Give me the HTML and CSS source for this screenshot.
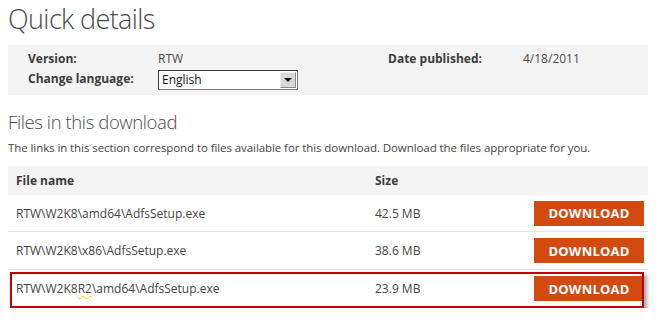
FILE: index.html
```html
<!DOCTYPE html>
<html lang="en">
<head>
  <meta charset="UTF-8">
  <title>Quick details</title>
  <link rel="stylesheet" href="styles.css">
</head>
<body>
<div class="page">
  <h1>Quick details</h1>

  <div class="details">
    <span class="label">Version:</span>
    <span class="value">RTW</span>
    <span class="label">Date published:</span>
    <span class="value">4/18/2011</span>

    <span class="label">Change language:</span>
    <span class="select">
      <span class="select-text">English</span>
      <span class="select-arrow"></span>
    </span>
  </div>

  <h2>Files in this download</h2>
  <p class="intro">The links in this section correspond to files available for this download. Download the files appropriate for you.</p>

  <div class="files">
    <div class="row head">
      <span class="name">File name</span>
      <span class="size">Size</span>
      <span></span>
    </div>
    <div class="row">
      <span class="name">RTW\W2K8\amd64\AdfsSetup.exe</span>
      <span class="size">42.5 MB</span>
      <button class="download">DOWNLOAD</button>
    </div>
    <div class="row">
      <span class="name">RTW\W2K8\x86\AdfsSetup.exe</span>
      <span class="size">38.6 MB</span>
      <button class="download">DOWNLOAD</button>
    </div>
    <div class="row marked">
      <span class="name">RTW\W2K8<span class="spell">R2</span>\amd64\AdfsSetup.exe</span>
      <span class="size">23.9 MB</span>
      <button class="download">DOWNLOAD</button>
      <div class="highlight"></div>
    </div>
  </div>
</div>
</body>
</html>
```

FILE: styles.css
```css
* {
  margin: 0;
  padding: 0;
  box-sizing: border-box;
}

body {
  font-family: 'Open Sans', 'Liberation Sans', sans-serif;
  font-size: 12px;
  color: #454545;
  background: white;
}

.page {
  width: 657px;
  padding: 2px 9px 0 8px;
}

h1 {
  font-weight: 300;
  font-size: 27px;
  line-height: 34px;
  color: #4a4a4a;
  letter-spacing: -0.6px;
  margin-bottom: 9px;
}

.details {
  background: #f4f4f4;
  height: 50px;
  padding: 3px 20px 0 20px;
  display: grid;
  grid-template-columns: 130px 230px 135px auto;
  grid-auto-rows: 20px;
  align-items: center;
}

.label {
  font-weight: 700;
  color: #3b3b3b;
}

.value {
  color: #4a4a4a;
}

.select {
  width: 140px;
  height: 20px;
  margin-top: 3px;
  border: 1px solid #7a7a7a;
  border-top-color: #3c3c3c;
  border-left-color: #3c3c3c;
  background: white;
  display: flex;
  align-items: center;
  justify-content: space-between;
  padding: 0 1px 0 3px;
  color: #111;
  font-size: 12px;
}

.select-arrow {
  width: 16px;
  height: 16px;
  background: #d8d8d8;
  border: 1px solid #f0f0f0;
  border-right-color: #888;
  border-bottom-color: #888;
  position: relative;
}

.select-arrow::after {
  content: '';
  position: absolute;
  left: 3px;
  top: 5px;
  border-left: 4px solid transparent;
  border-right: 4px solid transparent;
  border-top: 4px solid #111;
}

h2 {
  font-weight: 300;
  font-size: 18.5px;
  line-height: 24px;
  color: #4a4a4a;
  letter-spacing: -0.4px;
  margin-top: 15px;
}

.intro {
  margin-top: 5px;
  line-height: 18px;
  font-size: 11.5px;
  letter-spacing: -0.08px;
}

.files {
  margin-top: 9px;
  width: 640px;
}

.row {
  display: grid;
  grid-template-columns: 359px 1fr 110px;
  align-items: center;
  height: 38px;
  padding: 0 4px 0 8px;
  border-bottom: 1px solid #e2e2e2;
  position: relative;
}

.row.head {
  background: #f4f4f4;
  height: 29px;
  border-bottom: none;
  font-weight: 700;
  color: #3b3b3b;
}

.row:nth-child(2) {
  height: 37px;
}

.download {
  height: 25px;
  border: none;
  background: #d24a10;
  color: white;
  font-family: 'Open Sans', 'Liberation Sans', sans-serif;
  font-weight: 700;
  font-size: 13px;
  letter-spacing: 0.2px;
}

.spell {
  text-decoration: underline wavy #e6d200;
  text-decoration-thickness: 1px;
  text-underline-offset: 2px;
}

.highlight {
  position: absolute;
  left: 2px;
  top: 2px;
  width: 634px;
  height: 36px;
  border: 2px solid #c00000;
  box-shadow: 3px 3px 4px rgba(0, 0, 0, 0.35);
  pointer-events: none;
}
```
